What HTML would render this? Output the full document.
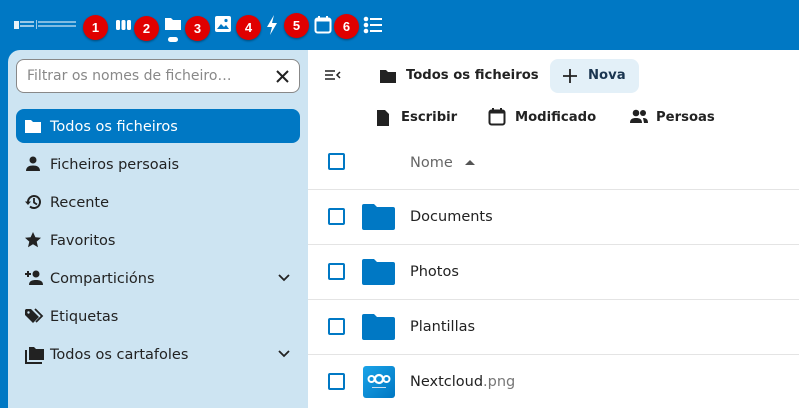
<!DOCTYPE html>
<html><head><meta charset="utf-8"><style>
*{box-sizing:border-box;margin:0;padding:0}
body{width:799px;height:408px;overflow:hidden;background:#0078c4;font-family:"Liberation Sans","DejaVu Sans",sans-serif;position:relative}
.hdr{position:absolute;left:0;top:0;width:799px;height:50px;background:#0078c4}
.badge{position:absolute;width:25px;height:25px;border-radius:50%;background:#e00000;color:#fff;font-weight:bold;font-size:13px;text-align:center;line-height:25px;box-shadow:0 1px 2px rgba(0,0,0,.4)}
.ic{position:absolute}
.side{position:absolute;left:8px;top:50px;width:300px;height:358px;background:#cde4f2;border-top-left-radius:12px}
.search{position:absolute;left:8px;top:9px;width:284px;height:34px;background:#fff;border:1px solid #888;border-radius:8px;color:#888;padding:8px 10px;font-family:"DejaVu Sans",sans-serif;font-size:14px}
.nav{position:absolute;left:8px;width:284px;height:34px;border-radius:8px;font-family:"DejaVu Sans",sans-serif;font-size:14.5px;color:#222;line-height:36px;padding-left:34px}
.nav svg{position:absolute;left:8px;top:8px}
.nav .chev{position:absolute;right:10px;top:0;left:auto}
.main{position:absolute;left:308px;top:50px;width:491px;height:358px;background:#fff}
.t{position:absolute;font-family:"DejaVu Sans",sans-serif;color:#222;white-space:nowrap}
.b{font-weight:bold;font-size:13.2px}
.cb{position:absolute;left:20px;width:17px;height:17px;border:2px solid #0078c4;border-radius:2px}
.row{position:absolute;left:0;width:491px;height:1px;background:#e4e4e4}
.fold{position:absolute;left:54px;width:33px;height:26px}
</style></head><body>
<div class="hdr">
 <div style="position:absolute;left:14px;top:21px;width:5px;height:8px;background:#fff;opacity:.9"></div>
 <div style="position:absolute;left:20px;top:21px;width:14px;height:6px;border-top:2px solid rgba(255,255,255,.6);border-bottom:2px solid rgba(255,255,255,.6)"></div>
 <div style="position:absolute;left:36px;top:20px;width:1px;height:9px;background:#fff;opacity:.6"></div>
 <div style="position:absolute;left:38px;top:21px;width:38px;height:6px;border-top:2px solid rgba(255,255,255,.5);border-bottom:2px solid rgba(255,255,255,.5)"></div>
 <svg class="ic" style="left:115px;top:17px" width="17" height="16"><rect x="1" y="3" width="4" height="10" rx="1.5" fill="#fff"/><rect x="6.5" y="3" width="4" height="10" rx="1.5" fill="#fff"/><rect x="12" y="3" width="4" height="10" rx="1.5" fill="#fff"/></svg>
 <svg class="ic" style="left:164px;top:16px" width="18" height="16"><path d="M1 2h6l2 2h8v10H1z" fill="#fff"/></svg>
 <div style="position:absolute;left:168px;top:37px;width:10px;height:5px;border-radius:3px;background:#fff"></div>
 <svg class="ic" style="left:214px;top:15px" width="18" height="18"><rect x="1" y="1" width="16" height="16" rx="2" fill="#fff"/><path d="M3 14l4-5 3 3 2-2 3 4z" fill="#0078c4"/><circle cx="12" cy="5.5" r="1.6" fill="#0078c4"/></svg>
 <svg class="ic" style="left:265px;top:14px" width="14" height="22"><path d="M9 1L2 13h5l-2 8 7-12H7z" fill="#fff"/></svg>
 <svg class="ic" style="left:314px;top:15px" width="18" height="20"><rect x="1.5" y="3.5" width="15" height="14" rx="2" fill="none" stroke="#fff" stroke-width="2"/><rect x="1.5" y="3.5" width="15" height="3" fill="#fff"/><rect x="4" y="1" width="2" height="4" fill="#fff"/><rect x="12" y="1" width="2" height="4" fill="#fff"/></svg>
 <svg class="ic" style="left:363px;top:16px" width="20" height="18"><circle cx="3" cy="3" r="2.3" fill="#fff"/><circle cx="3" cy="9" r="2.3" fill="#fff"/><circle cx="3" cy="15" r="2.3" fill="#fff"/><rect x="7" y="2" width="12" height="2" fill="#fff"/><rect x="7" y="8" width="12" height="2" fill="#fff"/><rect x="7" y="14" width="12" height="2" fill="#fff"/></svg>
 <div class="badge" style="left:83px;top:15px">1</div>
 <div class="badge" style="left:134px;top:16px">2</div>
 <div class="badge" style="left:185px;top:16px">3</div>
 <div class="badge" style="left:236px;top:15px">4</div>
 <div class="badge" style="left:284px;top:13px">5</div>
 <div class="badge" style="left:334px;top:14px">6</div>
</div>
<div class="side">
 <div class="search">Filtrar os nomes de ficheiro…<svg style="position:absolute;right:10px;top:10px" width="13" height="13"><path d="M1 1L12 12M12 1L1 12" stroke="#222" stroke-width="2"/></svg></div>
 <div class="nav" style="top:59px;background:#0078c4;color:#fff"><svg width="18" height="18"><path d="M1 3h6l2 2h8v11H1z" fill="#fff"/></svg>Todos os ficheiros</div>
 <div class="nav" style="top:97px"><svg width="18" height="18"><circle cx="9" cy="5" r="3.5" fill="#222"/><path d="M2 16c0-4 3-5.5 7-5.5s7 1.5 7 5.5z" fill="#222"/></svg>Ficheiros persoais</div>
 <div class="nav" style="top:135px"><svg width="18" height="18"><path d="M4 9a6 6 0 1 1 2 4.5" fill="none" stroke="#222" stroke-width="2"/><path d="M1 8.5h6L4 12z" fill="#222"/><path d="M10 5v4.5l3 2" fill="none" stroke="#222" stroke-width="1.8"/></svg>Recente</div>
 <div class="nav" style="top:173px"><svg width="18" height="18"><path d="M9 1l2.4 5.3 5.6.5-4.3 3.8 1.3 5.6L9 13.3 4 16.2l1.3-5.6L1 6.8l5.6-.5z" fill="#222"/></svg>Favoritos</div>
 <div class="nav" style="top:211px"><svg width="20" height="18"><path d="M1 5h6M4 2v6" stroke="#222" stroke-width="2"/><circle cx="12" cy="5" r="3.5" fill="#222"/><path d="M5 16c0-4 3-5 7-5s7 1 7 5z" fill="#222"/></svg>Comparticións<svg class="chev" width="12" height="34"><path d="M1 14l5 5 5-5" fill="none" stroke="#222" stroke-width="1.8"/></svg></div>
 <div class="nav" style="top:249px"><svg width="20" height="18"><path d="M1 3v5l8 8 6-6-8-8H2z" fill="#222"/><path d="M11 2l7 7-6 6" fill="none" stroke="#222" stroke-width="1.8"/><circle cx="4.5" cy="5.5" r="1.2" fill="#cde4f2"/></svg>Etiquetas</div>
 <div class="nav" style="top:287px"><svg width="22" height="20"><path d="M5 2h5l2 2h8v11H5z" fill="#222"/><path d="M2 5v13h16" fill="none" stroke="#222" stroke-width="2"/></svg>Todos os cartafoles<svg class="chev" width="12" height="34"><path d="M1 14l5 5 5-5" fill="none" stroke="#222" stroke-width="1.8"/></svg></div>
</div>
<div class="main">
 <svg class="ic" style="left:16px;top:19px" width="18" height="14"><path d="M1 2h10M1 6h8M1 10h10" stroke="#222" stroke-width="1.6"/><path d="M16 3l-3 3 3 3" fill="none" stroke="#222" stroke-width="1.5"/></svg>
 <svg class="ic" style="left:71px;top:18px" width="18" height="16"><path d="M1 2h6l2 2h8v11H1z" fill="#222"/></svg>
 <div class="t b" style="left:98px;top:18px">Todos os ficheiros</div>
 <div style="position:absolute;left:242px;top:9px;width:89px;height:34px;background:#e3f0f8;border-radius:8px"></div>
 <svg class="ic" style="left:255px;top:19px" width="14" height="14"><path d="M7 0v14M0 7h14" stroke="#222" stroke-width="1.8"/></svg>
 <div class="t b" style="left:280px;top:18px;color:#1a3550">Nova</div>
 <svg class="ic" style="left:67px;top:59px" width="16" height="18"><path d="M2 1h8l4 4v12H2z" fill="#222"/></svg>
 <div class="t b" style="left:93px;top:60px">Escribir</div>
 <svg class="ic" style="left:180px;top:57px" width="18" height="20"><rect x="1.5" y="3.5" width="15" height="14" rx="2" fill="none" stroke="#222" stroke-width="2"/><rect x="1.5" y="3.5" width="15" height="3" fill="#222"/><rect x="4" y="1" width="2" height="4" fill="#222"/><rect x="12" y="1" width="2" height="4" fill="#222"/></svg>
 <div class="t b" style="left:207px;top:60px">Modificado</div>
 <svg class="ic" style="left:321px;top:59px" width="20" height="16"><circle cx="7" cy="4" r="3.3" fill="#222"/><circle cx="14" cy="4" r="3" fill="#222"/><path d="M1 14c0-4 2.5-5 6-5s6 1 6 5zM14 9c3 0 5 1 5 5h-4z" fill="#222"/></svg>
 <div class="t b" style="left:348px;top:60px">Persoas</div>
 <div class="cb" style="top:103px"></div>
 <div class="t" style="left:102px;top:105px;font-size:14.5px;color:#666">Nome</div>
 <svg class="ic" style="left:156px;top:109px" width="12" height="8"><path d="M1 6l5-5 5 5z" fill="#555"/></svg>
 <div class="row" style="top:139px"></div>
 <div class="cb" style="top:158px"></div><svg class="fold" style="top:154px" viewBox="0 0 33 26"><path d="M2 0h10l3 3h16a2 2 0 0 1 2 2v19a2 2 0 0 1-2 2H2a2 2 0 0 1-2-2V2a2 2 0 0 1 2-2z" fill="#0078c4"/></svg>
 <div class="t" style="left:102px;top:159px;font-size:14.5px">Documents</div>
 <div class="row" style="top:194px"></div>
 <div class="cb" style="top:213px"></div><svg class="fold" style="top:209px" viewBox="0 0 33 26"><path d="M2 0h10l3 3h16a2 2 0 0 1 2 2v19a2 2 0 0 1-2 2H2a2 2 0 0 1-2-2V2a2 2 0 0 1 2-2z" fill="#0078c4"/></svg>
 <div class="t" style="left:102px;top:214px;font-size:14.5px">Photos</div>
 <div class="row" style="top:249px"></div>
 <div class="cb" style="top:268px"></div><svg class="fold" style="top:264px" viewBox="0 0 33 26"><path d="M2 0h10l3 3h16a2 2 0 0 1 2 2v19a2 2 0 0 1-2 2H2a2 2 0 0 1-2-2V2a2 2 0 0 1 2-2z" fill="#0078c4"/></svg>
 <div class="t" style="left:102px;top:269px;font-size:14.5px">Plantillas</div>
 <div class="row" style="top:304px"></div>
 <div class="cb" style="top:323px"></div>
 <div style="position:absolute;left:55px;top:316px;width:32px;height:32px;border-radius:3px;background:linear-gradient(135deg,#1aa3e8,#0077c2)">
  <svg width="32" height="32"><circle cx="8.5" cy="13" r="3" fill="none" stroke="#fff" stroke-width="2"/><circle cx="16" cy="13" r="4" fill="none" stroke="#fff" stroke-width="2.2"/><circle cx="23.5" cy="13" r="3" fill="none" stroke="#fff" stroke-width="2"/><rect x="9" y="21" width="14" height="1" fill="#cde"/></svg>
 </div>
 <div class="t" style="left:102px;top:324px;font-size:14.5px">Nextcloud<span style="color:#777">.png</span></div>
</div>
</body></html>
